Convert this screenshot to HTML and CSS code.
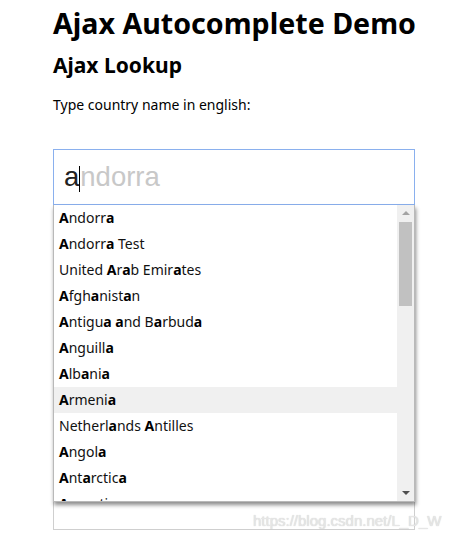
FILE: index.html
```html
<!DOCTYPE html>
<html>
<head>
<meta charset="utf-8">
<link rel="stylesheet" href="styles.css">
</head>
<body>
<div class="page">
  <h1 class="title">Ajax Autocomplete Demo</h1>
  <h2 class="subtitle">Ajax Lookup</h2>
  <p class="hint">Type country name in english:</p>
  <div class="field-wrap">
    <div class="search"><span class="typed">a</span><span class="caret"></span><span class="suggest">ndorra</span></div>
    <div class="dropdown">
      <ul class="list">
        <li><b>A</b>ndorr<b>a</b></li>
        <li><b>A</b>ndorr<b>a</b> Test</li>
        <li>United <b>A</b>r<b>a</b>b Emir<b>a</b>tes</li>
        <li><b>A</b>fgh<b>a</b>nist<b>a</b>n</li>
        <li><b>A</b>ntigu<b>a</b> <b>a</b>nd B<b>a</b>rbud<b>a</b></li>
        <li><b>A</b>nguill<b>a</b></li>
        <li><b>A</b>lb<b>a</b>ni<b>a</b></li>
        <li class="active"><b>A</b>rmeni<b>a</b></li>
        <li>Netherl<b>a</b>nds <b>A</b>ntilles</li>
        <li><b>A</b>ngol<b>a</b></li>
        <li><b>A</b>nt<b>a</b>rctic<b>a</b></li>
        <li><b>A</b>rgentin<b>a</b></li>
      </ul>
      <div class="scrollbar">
        <div class="arrow up"></div>
        <div class="thumb"></div>
        <div class="track"></div>
        <div class="arrow down"></div>
      </div>
    </div>
    <div class="second"></div>
  </div>
</div>
<div class="watermark">https://blog.csdn.net/L_D_W</div>
</body>
</html>
```
FILE: styles.css
```css
html, body {
  margin: 0;
  padding: 0;
  background: #fff;
}
body {
  font-family: "Noto Sans", "Open Sans", sans-serif;
  color: #000;
  position: relative;
  height: 542px;
  overflow: hidden;
}
.page {
  padding: 0 0 0 53px;
}
.title {
  font-size: 28.6px;
  font-weight: 700;
  margin: 0;
  padding-top: 4px;
  line-height: 38px;
  white-space: nowrap;
}
.subtitle {
  font-size: 21px;
  font-weight: 700;
  margin: 8px 0 0 0;
  line-height: 30px;
}
.hint {
  font-size: 14px;
  margin: 15px 0 0 0;
  line-height: 20px;
}
.field-wrap {
  position: relative;
  margin-top: 34px;
  width: 362px;
}
.search {
  box-sizing: border-box;
  height: 56px;
  border: 1px solid #8ab0ee;
  padding: 0 0 0 10px;
  display: flex;
  align-items: center;
  font-family: "Liberation Sans", Arial, sans-serif;
  font-size: 27.5px;
}
.typed {
  color: #222;
}
.caret {
  display: inline-block;
  width: 1px;
  height: 26px;
  background: #000;
  margin-top: 3px;
}
.suggest {
  color: #c8c8c8;
}
.dropdown {
  position: absolute;
  top: 56px;
  left: 0;
  width: 362px;
  height: 297px;
  box-sizing: border-box;
  border: 1px solid #b9b9b9;
  border-top: none;
  background: #fff;
  box-shadow: 1px 3px 4px rgba(0,0,0,0.45);
  display: flex;
  overflow: hidden;
  z-index: 2;
}
.list {
  list-style: none;
  margin: 0;
  padding: 0;
  flex: 1;
  font-size: 14px;
  overflow: hidden;
}
.list li {
  height: 26px;
  line-height: 25px;
  padding-left: 5px;
  white-space: nowrap;
  color: #111;
}
.list li b {
  font-weight: 700;
  color: #000;
}
.list li.active {
  background: #f0f0f0;
}
.scrollbar {
  width: 17px;
  background: #f0f0f0;
  display: flex;
  flex-direction: column;
}
.arrow {
  height: 17px;
  position: relative;
}
.arrow::after {
  content: "";
  position: absolute;
  left: 5px;
  width: 0;
  height: 0;
  border-left: 4px solid transparent;
  border-right: 4px solid transparent;
}
.arrow.up::after {
  top: 6px;
  border-bottom: 4px solid #a3a3a3;
}
.arrow.down::after {
  top: 7px;
  border-top: 4px solid #505050;
}
.thumb {
  height: 84px;
  margin: 0 2px;
  background: #c1c1c1;
}
.track {
  flex: 1;
}
.second {
  box-sizing: border-box;
  margin-top: 270px;
  height: 55px;
  border: 1px solid #cfcfcf;
}
.watermark {
  position: absolute;
  left: 253px;
  top: 512px;
  font-family: "Liberation Sans", Arial, sans-serif;
  font-size: 15px;
  color: #e6e6e6;
  text-shadow: 0 0 1px #c8c8c8;
  z-index: 3;
}
```
